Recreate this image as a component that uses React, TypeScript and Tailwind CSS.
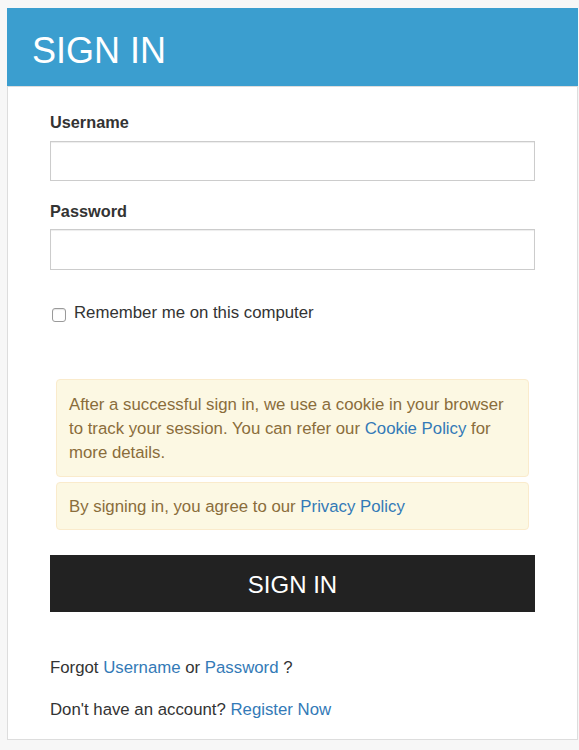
import React from "react";

export default function App() {
  return (
    <div
      className="min-h-[750px] bg-[#f7f7f7] pt-[8px] pl-[7px] pb-[10px]"
      style={{ fontFamily: '"Liberation Sans", Arial, sans-serif' }}
    >
      <div className="w-[571px]">
        <div className="h-[78px] bg-[#3b9ecf] pl-[25px] pt-[25px]">
          <h1 className="text-[36px] leading-[36px] font-normal text-white">SIGN IN</h1>
        </div>
        <div className="border border-[#dddddd] bg-white px-[42px] pt-[23px] pb-[17px] text-[16.8px] leading-[24px] text-[#333333]">
          <label className="block font-bold text-[16.3px] mb-[7px] pt-[1px] h-[24px] leading-[23px]">Username</label>
          <input
            type="text"
            className="block w-full h-[40px] border border-[#cccccc] shadow-[inset_0_1px_1px_rgba(0,0,0,0.075)] outline-none px-3"
          />
          <label className="block font-bold text-[16.3px] mt-[18px] mb-[6px] pt-[1px] h-[24px] leading-[23px]">Password</label>
          <input
            type="password"
            className="block w-full h-[41px] border border-[#cccccc] shadow-[inset_0_1px_1px_rgba(0,0,0,0.075)] outline-none px-3"
          />
          <div className="mt-[31px] flex items-center h-[24px]">
            <span className="ml-[2px] mt-[3px] w-[14px] h-[14px] rounded-[3px] border border-[#9a9a9a] bg-white shadow-[inset_0_1px_1px_rgba(0,0,0,0.1)]" />
            <span className="ml-[8px]">Remember me on this computer</span>
          </div>
          <div className="mx-[6px] mt-[54px] rounded-[4px] border border-[#faebcc] bg-[#fcf8e3] px-[12px] pt-[13px] pb-[11px] text-[#8a6d3b]">
            After a successful sign in, we use a cookie in your browser to track your session. You can refer our{" "}
            <a className="text-[#337ab7]">Cookie Policy</a> for more details.
          </div>
          <div className="mx-[6px] mt-[5px] rounded-[4px] border border-[#faebcc] bg-[#fcf8e3] px-[12px] pt-[12px] pb-[10px] text-[#8a6d3b]">
            By signing in, you agree to our <a className="text-[#337ab7]">Privacy Policy</a>
          </div>
          <button className="mt-[25px] w-full h-[57px] pt-[2px] bg-[#222222] text-white text-[24px] leading-[24px]">
            SIGN IN
          </button>
          <p className="mt-[44px]">
            Forgot <a className="text-[#337ab7]">Username</a> or <a className="text-[#337ab7]">Password</a> ?
          </p>
          <p className="mt-[18px]">
            Don't have an account? <a className="text-[#337ab7]">Register Now</a>
          </p>
        </div>
      </div>
    </div>
  );
}
